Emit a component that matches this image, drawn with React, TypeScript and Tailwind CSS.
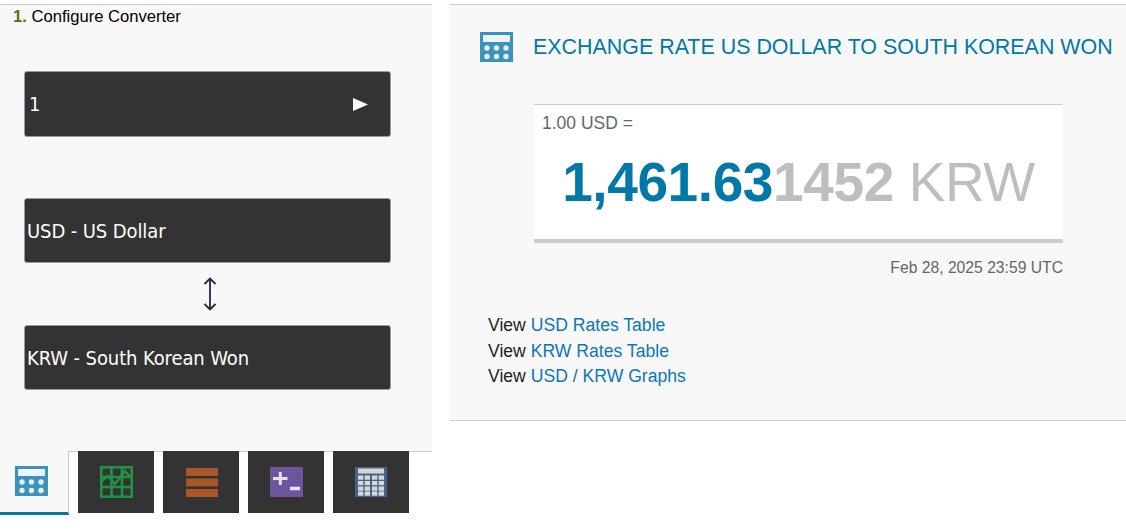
import React from "react";

function CalcIcon({ className = "" }: { className?: string }) {
  return (
    <svg width="33" height="30" viewBox="0 0 33 30" className={`blur-[0.4px] ${className}`}>
      <rect x="0" y="0" width="33" height="30" fill="#3b92bb" />
      <rect x="3" y="3" width="27" height="7" fill="#eef3f6" />
      {[7, 16.5, 26].map((x) => (
        <g key={x}>
          <circle cx={x} cy="16" r="2.7" fill="#e6f0f5" />
          <circle cx={x} cy="24.5" r="2.7" fill="#e6f0f5" />
        </g>
      ))}
    </svg>
  );
}

function GraphIcon() {
  return (
    <svg width="33" height="32" viewBox="0 0 33 32" fill="none" stroke="#1f9343" strokeWidth="2.6" className="blur-[0.6px]">
      <rect x="1.3" y="1.3" width="30.4" height="29.4" />
      <path d="M11.5 1V31M22 1V31M1 11H32M1 21H32" />
      <path d="M1.5 15L8 10L15 18L25 5L32 13" strokeWidth="2.6" />
    </svg>
  );
}

function RowsIcon() {
  return (
    <svg width="32" height="29" viewBox="0 0 32 29" fill="#a9572a" className="ml-[2px] blur-[0.3px]">
      <rect x="0" y="0" width="32" height="8" />
      <rect x="0" y="10.5" width="32" height="8" />
      <rect x="0" y="21" width="32" height="8" />
    </svg>
  );
}

function PlusMinusIcon() {
  return (
    <svg width="33" height="30" viewBox="0 0 33 30" className="blur-[0.4px]">
      <rect width="33" height="30" fill="#6c549f" />
      <path d="M3 11.5H17.5M10.3 5V18" stroke="#e6e3ee" strokeWidth="3" fill="none" />
      <path d="M20 21.5H30" stroke="#e6e3ee" strokeWidth="3.5" fill="none" />
    </svg>
  );
}

function CalendarIcon() {
  return (
    <svg width="32" height="30" viewBox="0 0 32 30" className="blur-[0.7px]">
      <rect width="32" height="30" fill="#476488" />
      <rect x="3" y="1.5" width="26" height="5" fill="#d4d6d8" />
      {[3, 9.7, 17, 23.7].map((x) =>
        [8.5, 14, 19.5, 24.5].map((y) => (
          <rect key={`${x}-${y}`} x={x} y={y} width="5.3" height="4.2" fill="#d8d8d8" />
        ))
      )}
    </svg>
  );
}

function DarkBox({ children, className = "" }: { children: React.ReactNode; className?: string }) {
  return (
    <div
      className={`flex items-center justify-between w-[367px] rounded-[3px] border border-[#9a9a9a] bg-[#333333] pl-[2px] pr-[22px] text-[#ffffff] text-[20px] font-['DejaVu_Sans',sans-serif] font-stretch-condensed tracking-[-0.1px] ${className}`}
    >
      {children}
    </div>
  );
}

function Tab({ children }: { children: React.ReactNode }) {
  return <div className="flex items-center justify-center w-[76px] h-[62px] bg-[#333333]">{children}</div>;
}

function ViewLink({ label }: { label: string }) {
  return (
    <div className="h-[25.5px] leading-[25.5px]">
      View <span className="text-[#0b76b8]">{label}</span>
    </div>
  );
}

export default function App() {
  return (
    <div className="w-[1126px] h-[532px] bg-white pt-[4px] flex gap-[18px] overflow-hidden font-['Liberation_Sans',sans-serif] text-[#222222]">
      <div className="w-[432px] flex flex-col">
        <div className="h-[447px] bg-[#f8f8f8] border-t border-[#cccccc] flex flex-col">
          <div className="pl-[13px] pt-[3px] text-[16.6px] leading-[18px] text-black">
            <span className="font-bold text-[#4f7a12]">1.</span> Configure Converter
          </div>
          <div className="pl-[24px] pt-[45px] flex flex-col">
            <DarkBox className="h-[66px]">
              <span className="pl-[2px]">1</span>
              <svg width="15" height="13" viewBox="0 0 15 13" className="shrink-0">
                <path d="M0 0L15 6.5L0 13Z" fill="#ffffff" />
              </svg>
            </DarkBox>
            <div className="h-[61px]" />
            <DarkBox className="h-[65px]">USD - US Dollar</DarkBox>
            <div className="h-[62px] w-[367px] flex items-center justify-center pl-[5px]">
              <svg width="14" height="34" viewBox="0 0 14 34" fill="none" stroke="#1d2b45" strokeWidth="1.8">
                <path d="M7 1V33M1.5 7L7 1.5L12.5 7M1.5 27L7 32.5L12.5 27" />
              </svg>
            </div>
            <DarkBox className="h-[65px]">KRW - South Korean Won</DarkBox>
          </div>
        </div>
        <div className="flex h-[64px] bg-white">
          <div className="w-[69px] h-[64px] bg-[#f8f8f8] border-r border-[#c8c8c8] border-b-[3px] border-b-[#0078a8] flex items-center justify-center pr-[5px] pb-[1px]">
            <CalcIcon />
          </div>
          <div className="flex-1 h-[62px] border-t border-[#cccccc]">
            <div className="flex gap-[9px] pl-[9px] -mt-[1px]">
              <Tab><GraphIcon /></Tab>
              <Tab><RowsIcon /></Tab>
              <Tab><PlusMinusIcon /></Tab>
              <Tab><CalendarIcon /></Tab>
            </div>
          </div>
        </div>
      </div>
      <div className="flex-1 h-[417px] bg-[#f8f8f8] border-t border-b border-[#cccccc]">
        <div className="flex items-center pl-[30px] pt-[26px] gap-[20px]">
          <CalcIcon />
          <div className="text-[21.43px] leading-[30px] pt-[1px] whitespace-nowrap text-[#0078a8]">EXCHANGE RATE US DOLLAR TO SOUTH KOREAN WON</div>
        </div>
        <div className="ml-[84px] mt-[42px] w-[529px] h-[139px] bg-white border-t border-[#cccccc] border-b-[4px] border-b-[#cccccc] flex flex-col">
          <div className="pl-[8px] pt-[8px] text-[17.5px] leading-[20px] text-[#666666]">1.00 USD =</div>
          <div className="text-center text-[55px] leading-[66px] pt-[16px] whitespace-nowrap tracking-[-0.4px]">
            <span className="font-bold text-[#0078a8]">1,461.63</span>
            <span className="font-bold text-[#bcbec0]">1452</span>
            <span className="text-[#bcbec0]"> KRW</span>
          </div>
        </div>
        <div className="ml-[84px] w-[529px] text-right text-[15.7px] leading-[18px] pt-[16px] text-[#666666]">
          Feb 28, 2025 23:59 UTC
        </div>
        <div className="pl-[38px] pt-[36px] text-[17.6px]">
          <ViewLink label="USD Rates Table" />
          <ViewLink label="KRW Rates Table" />
          <ViewLink label="USD / KRW Graphs" />
        </div>
      </div>
    </div>
  );
}
